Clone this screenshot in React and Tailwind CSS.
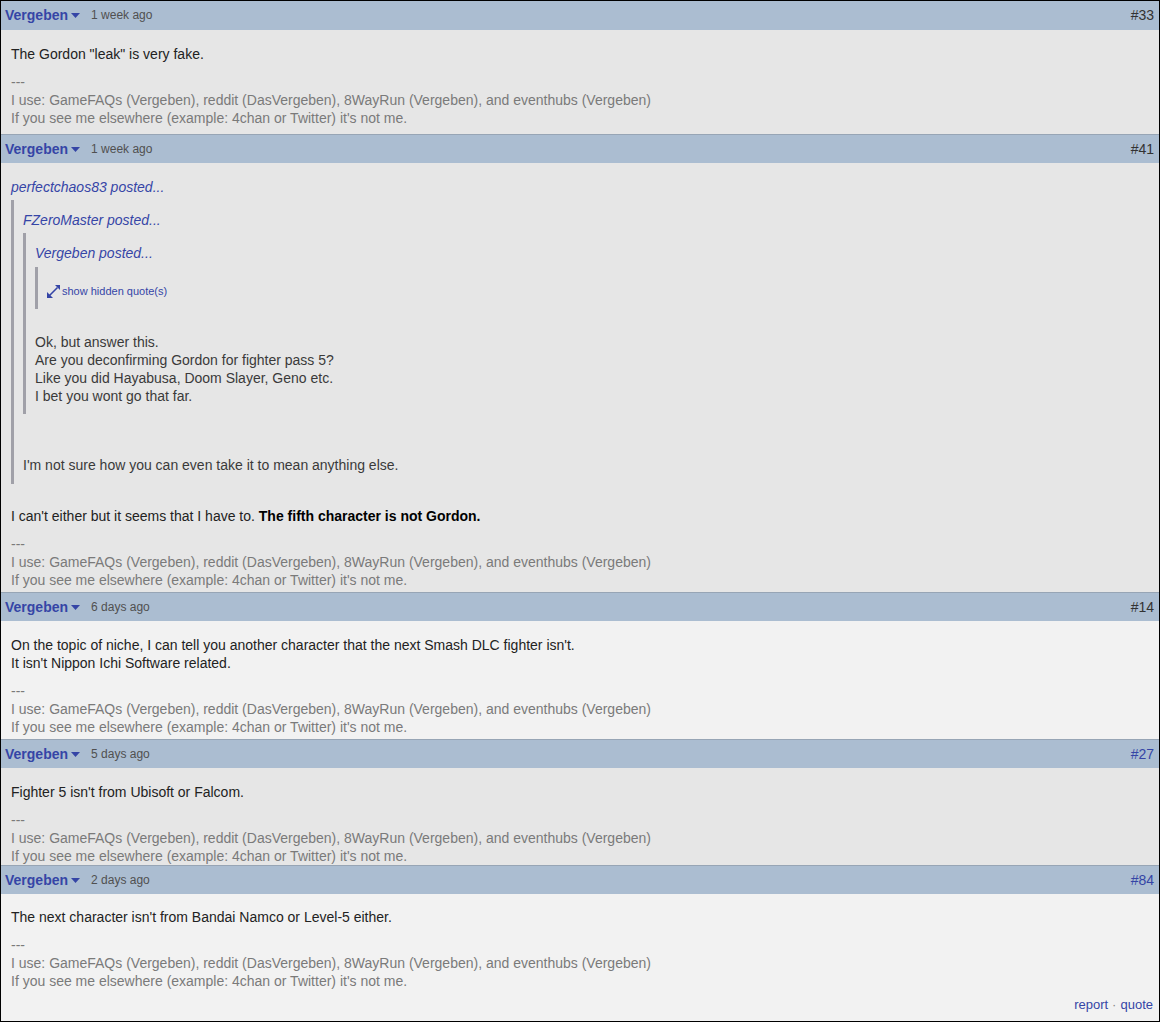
import React from "react";

const Header = ({ time, num, blueNum, first }) => (
  <div
    className={
      "h-[29px] flex items-center justify-between bg-[#abbdd1] pl-[4px] pr-[5px] pb-[1px] " +
      (first ? "" : "border-t border-[#97a5b5]")
    }
  >
    <div className="flex items-center">
      <span className="font-bold text-[14px] leading-[18px] text-[#3545a6]">Vergeben</span>
      <svg width="9" height="5" viewBox="0 0 9 5" className="ml-[3px] mt-[1px]">
        <polygon points="0,0 9,0 4.5,5" fill="#3545a6" />
      </svg>
      <span className="ml-[11px] text-[12px] leading-[16px] text-[#505050]">{time}</span>
    </div>
    <span className={"text-[14px] leading-[18px] " + (blueNum ? "text-[#3545a6]" : "text-[#333]")}>{num}</span>
  </div>
);

const Sig = () => (
  <div className="mt-[10px] text-[#7a7a7a]">
    <div>---</div>
    <div>I use: GameFAQs (Vergeben), reddit (DasVergeben), 8WayRun (Vergeben), and eventhubs (Vergeben)</div>
    <div>If you see me elsewhere (example: 4chan or Twitter) it's not me.</div>
  </div>
);

const Label = ({ children }) => <div className="italic text-[#3545a6]">{children}</div>;

export default function App() {
  return (
    <div
      className="w-[1160px] h-[1022px] border border-black flex flex-col text-[14px] leading-[18px] text-[#222]"
      style={{ fontFamily: '"Liberation Sans", Arial, sans-serif' }}
    >
      <Header time="1 week ago" num="#33" first />
      <div className="h-[104px] bg-[#e6e6e6] pt-[15px] px-[10px]">
        <div>The Gordon "leak" is very fake.</div>
        <Sig />
      </div>

      <Header time="1 week ago" num="#41" />
      <div className="h-[429px] bg-[#e6e6e6] pt-[15px] px-[10px]">
        <Label>perfectchaos83 posted...</Label>
        <div className="mt-[4px] border-l-[3px] border-[#a0a0a8] pl-[9px] pt-[11px] pb-[10px] text-[#3a3a3a]">
          <Label>FZeroMaster posted...</Label>
          <div className="mt-[4px] border-l-[3px] border-[#a0a0a8] pl-[9px] pt-[11px] pb-[9px]">
            <Label>Vergeben posted...</Label>
            <div className="mt-[5px] border-l-[3px] border-[#a0a0a8] pl-[9px] pt-[17px] pb-[11px]">
              <div className="flex items-center h-[14px] text-[11px] leading-[14px] text-[#3545a6]">
                <svg width="13" height="13" viewBox="0 0 13 13" className="mr-[2px]">
                  <line x1="2.5" y1="10.5" x2="10.5" y2="2.5" stroke="#3545a6" strokeWidth="1.6" />
                  <polygon points="0,13 0,7 6,13" fill="#3545a6" />
                  <polygon points="13,0 13,5 8,0" fill="#3545a6" />
                </svg>
                <span>show hidden quote(s)</span>
              </div>
            </div>
            <div className="mt-[24px]">
              <div>Ok, but answer this.</div>
              <div>Are you deconfirming Gordon for fighter pass 5?</div>
              <div>Like you did Hayabusa, Doom Slayer, Geno etc.</div>
              <div>I bet you wont go that far.</div>
            </div>
          </div>
          <div className="mt-[42px]">I'm not sure how you can even take it to mean anything else.</div>
        </div>
        <div className="mt-[23px]">
          I can't either but it seems that I have to. <b className="text-black">The fifth character is not Gordon.</b>
        </div>
        <Sig />
      </div>

      <Header time="6 days ago" num="#14" />
      <div className="h-[118px] bg-[#f2f2f2] pt-[15px] px-[10px]">
        <div>On the topic of niche, I can tell you another character that the next Smash DLC fighter isn't.</div>
        <div>It isn't Nippon Ichi Software related.</div>
        <Sig />
      </div>

      <Header time="5 days ago" num="#27" blueNum />
      <div className="h-[97px] bg-[#e6e6e6] pt-[15px] px-[10px]">
        <div>Fighter 5 isn't from Ubisoft or Falcom.</div>
        <Sig />
      </div>

      <Header time="2 days ago" num="#84" blueNum />
      <div className="flex-1 flex flex-col bg-[#f2f2f2] pt-[14px] pl-[10px] pr-[6px]">
        <div>The next character isn't from Bandai Namco or Level-5 either.</div>
        <Sig />
        <div className="mt-auto pb-[8px] flex justify-end text-[13px] leading-[16px] text-[#3545a6]">
          <span>report</span>
          <span className="mx-[4px] text-[#888]">·</span>
          <span>quote</span>
        </div>
      </div>
    </div>
  );
}
